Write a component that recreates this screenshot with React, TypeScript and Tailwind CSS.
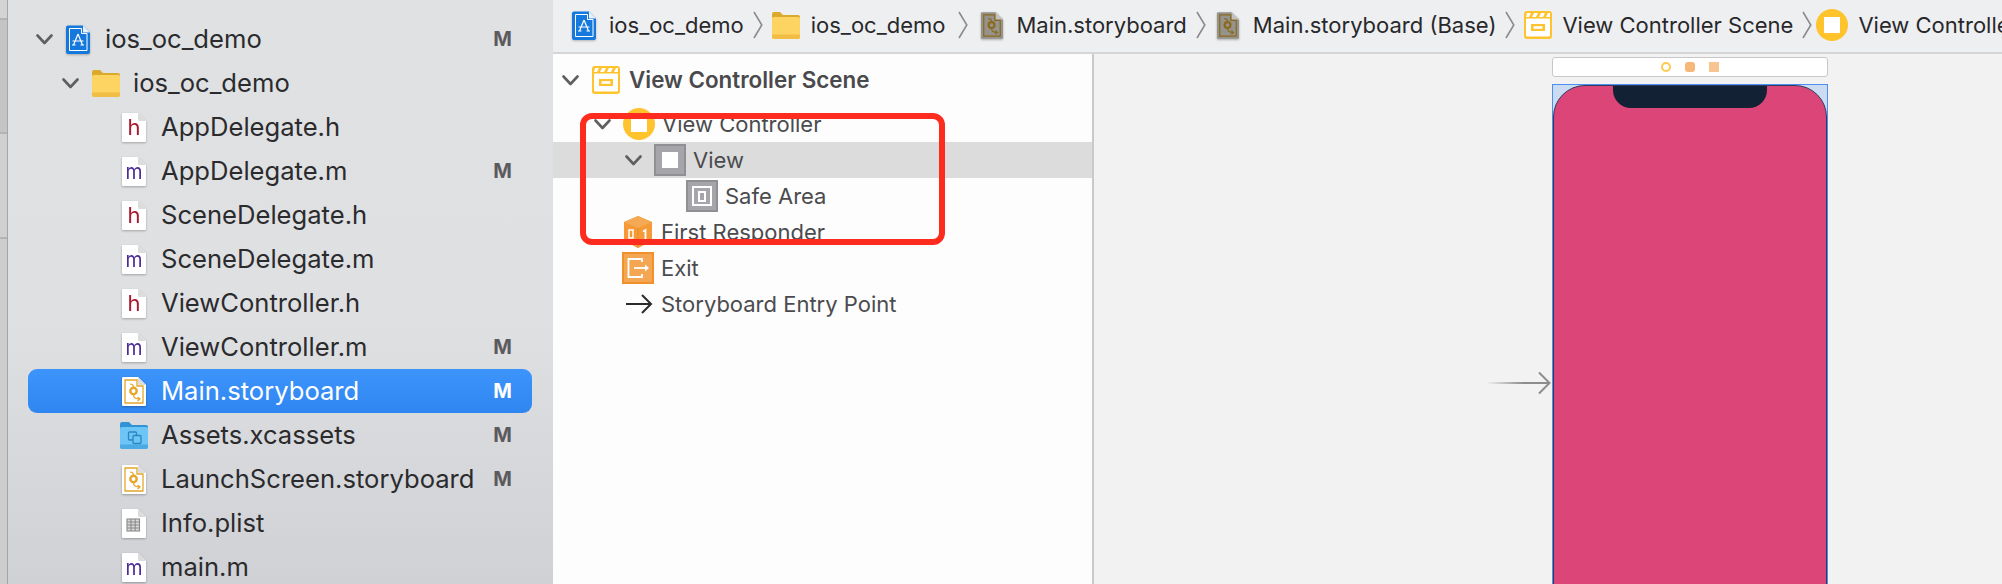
const ui = { fontFamily: 'Inter, "Liberation Sans", sans-serif' };

const Chevron = () => (
  <svg width="17" height="11" viewBox="0 0 17 11" fill="none">
    <path d="M1.5 1.5 8.5 9 15.5 1.5" stroke="#5f5f62" strokeWidth="2.6" strokeLinecap="round" strokeLinejoin="round" />
  </svg>
);

const CrumbSep = ({ className }: { className: string }) => (
  <svg width="10" height="28" viewBox="0 0 10 28" fill="none" className={`shrink-0 ${className}`}>
    <path d="M1 1 8.8 14 1 27" stroke="#8b8b8e" strokeWidth="1.6" />
  </svg>
);

const ProjectIcon = () => (
  <svg width="24" height="29" viewBox="0 0 24 29" className="shrink-0 drop-shadow-[0_1px_1px_rgba(0,0,0,0.25)]">
    <path d="M2 0.5H17L24 7.5V27a2 2 0 0 1-2 2H2a2 2 0 0 1-2-2V2.500a2 2 0 0 1 2-2Z" fill="#1578dc" />
    <path d="M17 0.5 24 7.500H17Z" fill="#e8f1fb" />
    <path d="M3.500 3.500H15.500V8.500H21V25.500H3.500Z" fill="none" stroke="#fff" strokeWidth="1" />
    <path d="M12 9 7.500 20M12 9 16.500 20M6.500 16H17.500M6 20h3.500M14.500 20H18" stroke="#fff" strokeWidth="1.200" fill="none" />
  </svg>
);

const Folder = () => (
  <svg width="28" height="28" viewBox="0 0 28 28" className="shrink-0">
    <path d="M0 3a2 2 0 0 1 2-2h6l3 3h15a2 2 0 0 1 2 2v6H0Z" fill="#dba92c" />
    <path d="M0 7.500a1.500 1.500 0 0 1 1.500-1.500h25A1.500 1.500 0 0 1 28 7.500V26a2 2 0 0 1-2 2H2a2 2 0 0 1-2-2Z" fill="#fdd462" />
    <path d="M0 23.500h28V26a2 2 0 0 1-2 2H2a2 2 0 0 1-2-2Z" fill="#f2bd43" />
  </svg>
);

const Doc = ({ children }: { children?: React.ReactNode }) => (
  <svg width="24" height="29" viewBox="0 0 24 29" className="shrink-0 drop-shadow-[0_1px_1px_rgba(0,0,0,0.28)]">
    <path d="M1 0H16L24 8V28a1 1 0 0 1-1 1H1a1 1 0 0 1-1-1V1a1 1 0 0 1 1-1Z" fill="#fff" />
    <path d="M16 0 24 8H17a1 1 0 0 1-1-1Z" fill="#dcdcdc" />
    {children}
  </svg>
);

const LetterFile = ({ letter }: { letter: 'h' | 'm' }) =>
  letter === 'h' ? (
    <Doc>
      <text x="12" y="22" textAnchor="middle" fontSize="22" fontFamily="Inter, sans-serif" fill="#a8182e">
        h
      </text>
    </Doc>
  ) : (
    <Doc>
      <text x="3.500" y="22" fontSize="22" textLength="17" lengthAdjust="spacingAndGlyphs" fontFamily="Inter, sans-serif" fill="#4b2b96">
        m
      </text>
    </Doc>
  );

const StoryboardArt = ({ c }: { c: string }) => (
  <g fill="none" stroke={c}>
    <path d="M3 3H15V9H21V26H3Z" strokeWidth="1.300" />
    <circle cx="11.500" cy="14" r="3.200" strokeWidth="2.400" />
    <path d="M8 7c3 0 3.500 2 3.500 3.500M11.500 18c0 3 2 4 6 4M15.500 20l2.500 2-2.500 2" strokeWidth="1.200" />
  </g>
);

const StoryboardFile = () => (
  <Doc>
    <StoryboardArt c="#e4a62b" />
  </Doc>
);

const StoryboardGray = () => (
  <svg width="22" height="29" viewBox="0 0 24 29" className="shrink-0 drop-shadow-[0_1px_1px_rgba(0,0,0,0.3)]">
    <path d="M1 0H16L24 8V28a1 1 0 0 1-1 1H1a1 1 0 0 1-1-1V1a1 1 0 0 1 1-1Z" fill="#96938c" />
    <path d="M16 0 24 8H17a1 1 0 0 1-1-1Z" fill="#c4c2bd" />
    <StoryboardArt c="#8a6a1c" />
  </svg>
);

const PlistFile = () => (
  <Doc>
    <g fill="none" stroke="#8a8a8a" strokeWidth="1.100">
      <rect x="5" y="10" width="12.500" height="12" fill="#d8d8d8" />
      <path d="M5 13h12.500M5 16h12.500M5 19h12.500M9 10v12M13.200 10v12" />
    </g>
  </Doc>
);

const AssetsFolder = () => (
  <svg width="28" height="28" viewBox="0 0 28 28" className="shrink-0">
    <path d="M0 3a2 2 0 0 1 2-2h7l3 3h14a2 2 0 0 1 2 2v6H0Z" fill="#2f93d6" />
    <path d="M0 7.500a1.500 1.500 0 0 1 1.500-1.500h25A1.500 1.500 0 0 1 28 7.500V26a2 2 0 0 1-2 2H2a2 2 0 0 1-2-2Z" fill="#6cc5f5" />
    <path d="M0 23.500h28V26a2 2 0 0 1-2 2H2a2 2 0 0 1-2-2Z" fill="#4aaae4" />
    <rect x="8.500" y="11" width="8" height="8" rx="1" fill="none" stroke="#2c85c4" strokeWidth="1.300" />
    <rect x="13" y="14.500" width="8" height="8" rx="1" fill="#6cc5f5" stroke="#2c85c4" strokeWidth="1.300" />
  </svg>
);

const SceneIcon = () => (
  <svg width="28" height="28" viewBox="0 0 28 28" className="shrink-0">
    <rect x="0" y="0" width="28" height="28" rx="3" fill="#fec32d" />
    <rect x="2" y="7.500" width="24" height="18" rx="1" fill="#fff" />
    <path d="M3 2h4l-2 4H2ZM10 2h4l-2 4H8ZM17 2h4l-2 4h-4ZM24 2h2v4h-4Z" fill="#fff" />
    <rect x="7" y="13" width="14" height="7" fill="#fec32d" />
    <rect x="9.500" y="15.200" width="9" height="2.600" fill="#fff" />
  </svg>
);

const VcIcon = () => (
  <svg width="32" height="32" viewBox="0 0 32 32" className="shrink-0">
    <circle cx="16" cy="16" r="16" fill="#fec32d" />
    <rect x="8" y="8" width="16" height="16" fill="#fff" />
  </svg>
);

const ViewIcon = () => (
  <div className="flex h-8 w-8 shrink-0 items-center justify-center border-[2px] border-[#8f8f94] bg-[#a5a5aa]">
    <div className="h-4 w-4 bg-white" />
  </div>
);

const SafeAreaIcon = () => (
  <div className="flex h-8 w-8 shrink-0 items-center justify-center border-[2px] border-[#8f8f94] bg-[#a5a5aa]">
    <div className="flex h-[20px] w-[20px] items-center justify-center border-[2px] border-white">
      <div className="h-[11px] w-[8px] border-[2px] border-white" />
    </div>
  </div>
);

const ResponderIcon = () => (
  <svg width="28" height="32" viewBox="0 0 28 32" className="shrink-0">
    <path d="M14 0 28 6V25L14 32 0 25V6Z" fill="#f59a36" />
    <path d="M14 0 28 6 14 12 0 6Z" fill="#f4a955" />
    <path d="M14 12V32" stroke="#e88a24" strokeWidth="1" />
    <rect x="5" y="14" width="4" height="8" fill="none" stroke="#fff" strokeWidth="1.500" />
    <path d="M19 15.500 21.500 14V24" fill="none" stroke="#fff" strokeWidth="1.800" />
  </svg>
);

const ExitIcon = () => (
  <svg width="32" height="32" viewBox="0 0 32 32" className="shrink-0">
    <rect x="1" y="1" width="30" height="30" fill="#f5a653" stroke="#f0912b" strokeWidth="2" />
    <path d="M20 10V7H6.500V25H20V22" fill="none" stroke="#fff" strokeWidth="1.800" />
    <path d="M12 16H24" stroke="#fff" strokeWidth="1.800" />
    <path d="M23 12.500 27 16 23 19.500Z" fill="#fff" />
  </svg>
);

const EntryIcon = () => (
  <svg width="28" height="22" viewBox="0 0 28 22" fill="none" className="shrink-0">
    <path d="M1 11H26M17 2 26 11 17 20" stroke="#2a2a2c" strokeWidth="2" />
  </svg>
);

// iconLeft is measured from the row's left edge, slot is icon + gap up to the label
type NavRow = { name: string; iconLeft: number; slot: number; icon: React.ReactNode; open?: boolean; mod?: boolean; selected?: boolean };

const navRows: NavRow[] = [
  { name: 'ios_oc_demo', iconLeft: 38, slot: 39, icon: <ProjectIcon />, open: true, mod: true },
  { name: 'ios_oc_demo', iconLeft: 64, slot: 41, icon: <Folder />, open: true },
  { name: 'AppDelegate.h', iconLeft: 94, slot: 39, icon: <LetterFile letter="h" /> },
  { name: 'AppDelegate.m', iconLeft: 94, slot: 39, icon: <LetterFile letter="m" />, mod: true },
  { name: 'SceneDelegate.h', iconLeft: 94, slot: 39, icon: <LetterFile letter="h" /> },
  { name: 'SceneDelegate.m', iconLeft: 94, slot: 39, icon: <LetterFile letter="m" /> },
  { name: 'ViewController.h', iconLeft: 94, slot: 39, icon: <LetterFile letter="h" /> },
  { name: 'ViewController.m', iconLeft: 94, slot: 39, icon: <LetterFile letter="m" />, mod: true },
  { name: 'Main.storyboard', iconLeft: 94, slot: 39, icon: <StoryboardFile />, mod: true, selected: true },
  { name: 'Assets.xcassets', iconLeft: 92, slot: 41, icon: <AssetsFolder />, mod: true },
  { name: 'LaunchScreen.storyboard', iconLeft: 94, slot: 39, icon: <StoryboardFile />, mod: true },
  { name: 'Info.plist', iconLeft: 94, slot: 39, icon: <PlistFile /> },
  { name: 'main.m', iconLeft: 94, slot: 39, icon: <LetterFile letter="m" /> },
];

function Navigator() {
  return (
    <div className="h-full w-[545px] shrink-0 bg-[linear-gradient(180deg,#e0e1e3_0%,#dfe0e2_55%,#d6d7da_82%,#d0d1d5_100%)] pt-[17px]">
      {navRows.map((row, i) => (
        <div
          key={i}
          className={`ml-5 flex h-11 w-[504px] items-center rounded-[9px] pr-5 ${
            row.selected ? 'bg-[linear-gradient(180deg,#3d94fb,#2f86f1)] text-white' : 'text-[#2b2b2e]'
          }`}
          style={{ paddingLeft: row.open ? row.iconLeft - 30 : row.iconLeft }}
        >
          {row.open && (
            <div className="mr-[13px] flex w-[17px] shrink-0">
              <Chevron />
            </div>
          )}
          <div className="flex shrink-0" style={{ width: row.slot }}>
            {row.icon}
          </div>
          <span className="whitespace-nowrap text-[25.6px] leading-none">{row.name}</span>
          {row.mod && (
            <span className={`ml-auto text-[20px] font-bold leading-none ${row.selected ? 'text-white' : 'text-[#5b5b5e]'}`}>M</span>
          )}
        </div>
      ))}
    </div>
  );
}

function Crumb({ icon, label, className }: { icon: React.ReactNode; label: string; className: string }) {
  return (
    <div className={`flex shrink-0 items-center ${className}`}>
      {icon}
      <span className="whitespace-nowrap text-[22px] leading-none text-[#28282b]">{label}</span>
    </div>
  );
}

function Breadcrumbs() {
  return (
    <div className="flex h-[50px] shrink-0 items-center overflow-hidden bg-[#eeeff1] pl-[19px] mb-[2px]">
      <Crumb icon={<ProjectIcon />} label="ios_oc_demo" className="gap-[13px]" />
      <CrumbSep className="ml-[9px]" />
      <Crumb icon={<Folder />} label="ios_oc_demo" className="ml-[9px] gap-[11px]" />
      <CrumbSep className="ml-[13px]" />
      <Crumb icon={<StoryboardGray />} label="Main.storyboard" className="ml-[13px] gap-[13px]" />
      <CrumbSep className="ml-[9px]" />
      <Crumb icon={<StoryboardGray />} label="Main.storyboard (Base)" className="ml-[11px] gap-[14px]" />
      <CrumbSep className="ml-[9px]" />
      <Crumb icon={<SceneIcon />} label="View Controller Scene" className="ml-[9px] gap-[10px]" />
      <CrumbSep className="ml-[9px]" />
      <Crumb icon={<VcIcon />} label="View Controller" className="ml-[4px] gap-[10px]" />
    </div>
  );
}

function OutlineRow({ left, slot = 39, open, icon, label, active }: { left: number; slot?: number; open?: boolean; icon: React.ReactNode; label: string; active?: boolean }) {
  return (
    <div className={`flex h-9 items-center ${active ? 'bg-[#dcdcdc]' : ''}`} style={{ paddingLeft: left }}>
      <div className="flex w-[29px] shrink-0">{open && <Chevron />}</div>
      <div className="flex shrink-0" style={{ width: slot }}>
        {icon}
      </div>
      <span className="text-[22px] leading-none text-[#4b4b4e]">{label}</span>
    </div>
  );
}

function Outline() {
  return (
    <div className="relative w-[541px] shrink-0 border-r-2 border-[#c9c9c9] bg-[#fdfdfd] pt-[6px]">
      <div className="flex h-10 items-center pl-[9px]">
        <div className="flex w-[30px] shrink-0">
          <Chevron />
        </div>
        <SceneIcon />
        <span className="ml-[9px] text-[22.4px] font-semibold leading-none text-[#4a4a4d]">View Controller Scene</span>
      </div>
      <div className="mt-[6px]">
        <OutlineRow left={41} open icon={<VcIcon />} label="View Controller" />
        <OutlineRow left={72} open icon={<ViewIcon />} label="View" active />
        <OutlineRow left={104} icon={<SafeAreaIcon />} label="Safe Area" />
        <OutlineRow left={42} slot={37} icon={<ResponderIcon />} label="First Responder" />
        <OutlineRow left={40} icon={<ExitIcon />} label="Exit" />
        <OutlineRow left={43} slot={36} icon={<EntryIcon />} label="Storyboard Entry Point" />
      </div>
      {/* red annotation box drawn over the tree */}
      <div className="absolute left-[27px] top-[59px] h-[132px] w-[365px] rounded-[12px] border-[6px] border-[#fe2c1f]" />
    </div>
  );
}

function Canvas() {
  return (
    <div className="relative min-w-0 flex-1 bg-[#f2f2f2] pl-[458px] pt-[3px]">
      <div className="flex h-[20px] w-[276px] items-center justify-center gap-[14px] rounded-[3px] border border-[#c8c8c8] bg-white">
        <div className="h-[10px] w-[10px] rounded-full border-[2.500px] border-[#fdca4d]" />
        <div className="h-[10px] w-[10px] rounded-[3px] bg-[#f6b878]" />
        <div className="h-[10px] w-[10px] bg-[#f8c490]" />
      </div>
      <div className="mt-[7px] h-[520px] w-[276px] border border-[#4a90ee] bg-[#cbdcf2]">
        <div className="flex h-full justify-center rounded-t-[32px] border border-[#2e3a5e] bg-[#dc4577]">
          <div className="h-[22px] w-[154px] rounded-b-[18px] bg-[#132135]" />
        </div>
      </div>
      <svg width="66" height="24" viewBox="0 0 66 24" fill="none" className="absolute left-[392px] top-[317px]">
        <defs>
          <linearGradient id="entry" x1="0" x2="1" y1="0" y2="0">
            <stop offset="0" stopColor="#8c8c8c" stopOpacity="0" />
            <stop offset="0.6" stopColor="#8c8c8c" />
          </linearGradient>
        </defs>
        <rect x="0" y="11" width="64" height="2" fill="url(#entry)" />
        <path d="M53 1.500 63.500 12 53 22.500" stroke="#8c8c8c" strokeWidth="2" />
      </svg>
    </div>
  );
}

export default function App() {
  return (
    <div className="flex h-[584px] w-[2002px] overflow-hidden bg-white" style={ui}>
      <div className="flex w-2 shrink-0 flex-col border-r border-[#a6a6a6] bg-[#cdcdcd]">
        <div className="h-[20px] shrink-0 border-b-2 border-[#b4b4b4] bg-[#d4d4d4]" />
        <div className="h-[114px] shrink-0 border-b-2 border-[#b4b4b4] bg-[#c4c4c4]" />
        <div className="h-[105px] shrink-0 border-b-2 border-[#b4b4b4] bg-[#d0d0d0]" />
      </div>
      <Navigator />
      <div className="flex min-w-0 flex-1 flex-col bg-[#eeeff1]">
        <Breadcrumbs />
        <div className="h-[2px] shrink-0 bg-[#d6d6d6]" />
        <div className="flex min-h-0 flex-1">
          <Outline />
          <Canvas />
        </div>
      </div>
    </div>
  );
}
